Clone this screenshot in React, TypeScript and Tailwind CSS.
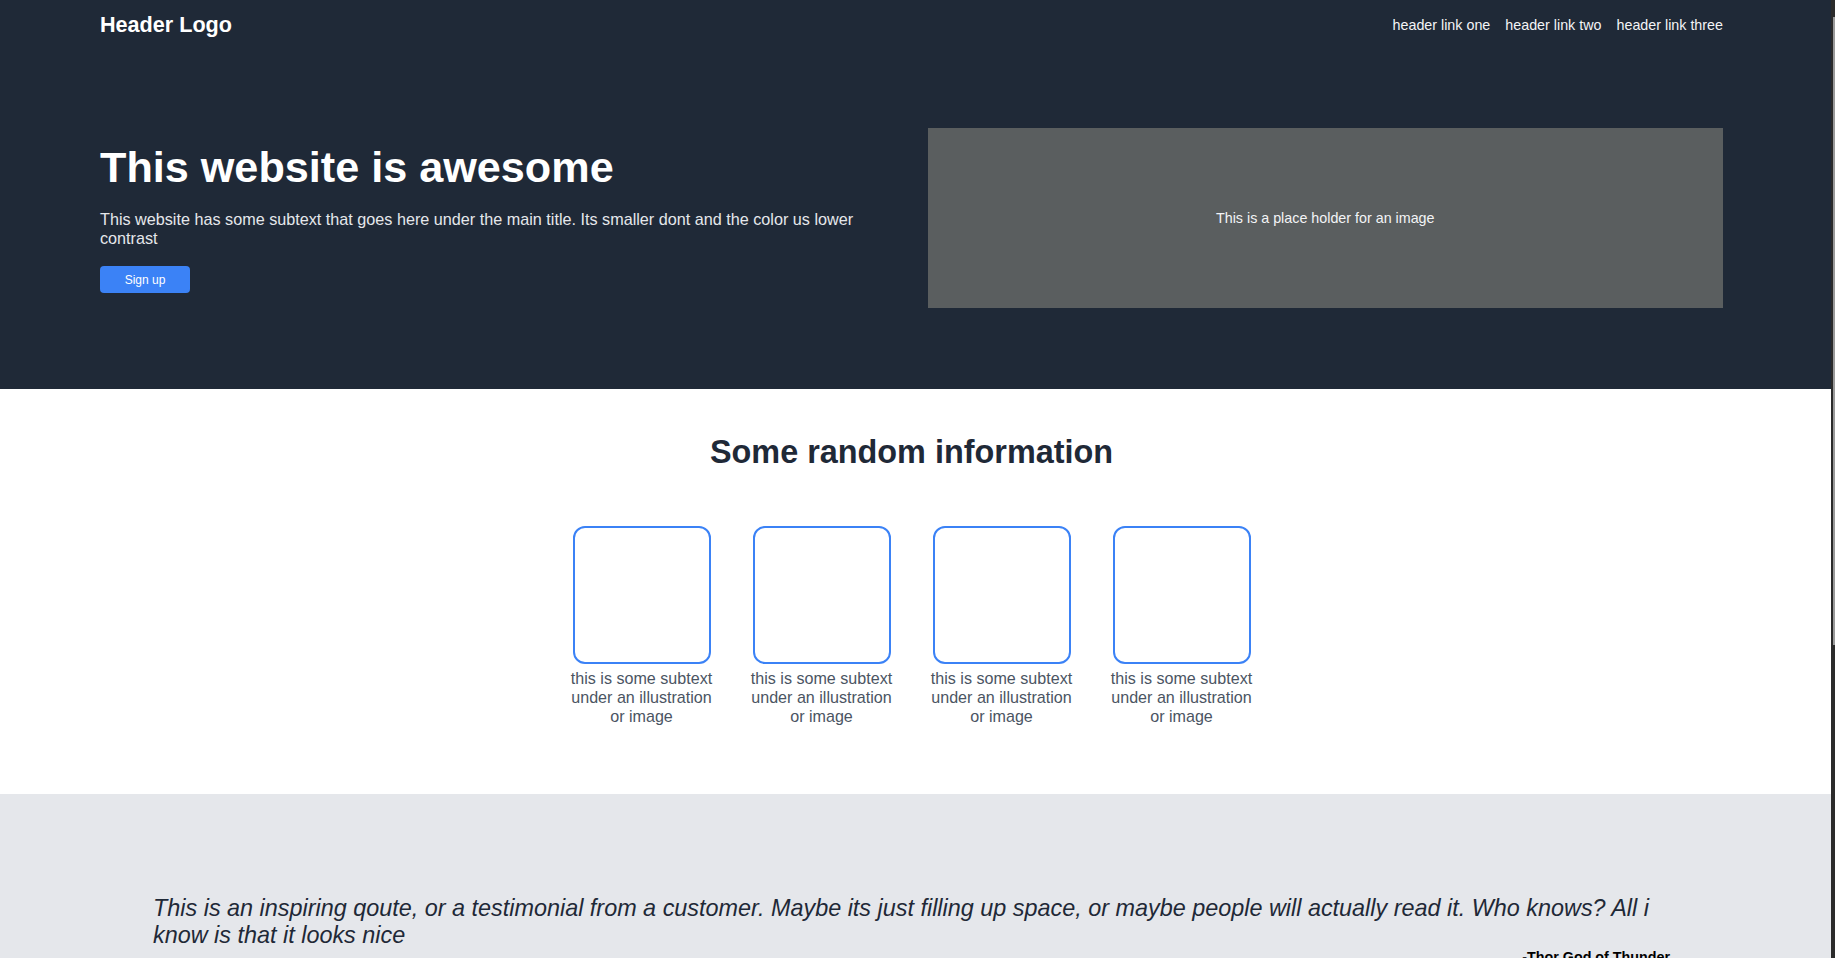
import React from "react";

const cards = [1, 2, 3, 4];

const Header: React.FC = () => (
  <header className="h-[50px] flex items-center justify-between">
    <span className="text-[21.6px] leading-[normal] font-bold text-white">Header Logo</span>
    <nav className="flex items-center gap-[15px] text-[14.3px] leading-[normal] text-gray-100">
      <a href="#">header link one</a>
      <a href="#">header link two</a>
      <a href="#">header link three</a>
    </nav>
  </header>
);

const Hero: React.FC = () => (
  <section className="bg-[#1f2937] pl-[100px] pr-[108px]">
    <Header />
    <div className="grid grid-cols-2 gap-8 items-center mt-[78px] pb-[81px]">
      <div>
        <h1 className="text-[43.2px] leading-[normal] font-bold text-white">This website is awesome</h1>
        <p className="mt-[18px] text-[16.2px] leading-[19px] text-gray-200">
          This website has some subtext that goes here under the main title. Its smaller dont and the color us lower
          contrast
        </p>
        <button className="mt-[18px] w-[90px] h-[27px] rounded-[4px] bg-[#3b82f6] text-white text-[12px] leading-none">
          Sign up
        </button>
      </div>
      <div className="h-[180px] bg-[#5a5e5f] flex items-center justify-center pt-[2px]">
        <span className="text-[14.3px] text-gray-100">This is a place holder for an image</span>
      </div>
    </div>
  </section>
);

const Info: React.FC = () => (
  <section className="bg-white pl-[100px] pr-[108px] pt-[45px] h-[405px]">
    <h2 className="text-center text-[32.4px] leading-[normal] font-bold text-[#1f2937]">Some random information</h2>
    <div className="mt-[55px] flex justify-center gap-[30px]">
      {cards.map((c) => (
        <div key={c} className="w-[150px] flex flex-col items-center">
          <div className="w-[138px] h-[138px] rounded-[12px] border-2 border-[#3b82f6]" />
          <p className="mt-[5px] text-center text-[16.1px] leading-[18.8px] text-[#4b5563]">
            this is some subtext under an illustration or image
          </p>
        </div>
      ))}
    </div>
  </section>
);

const Quote: React.FC = () => (
  <section className="bg-[#e5e7eb] pl-[153px] pr-[161px] pt-[101px] pb-10">
    <p className="italic text-[23.4px] leading-[27px] text-[#1f2937]">
      This is an inspiring qoute, or a testimonial from a customer. Maybe its just filling up space, or maybe people
      will actually read it. Who knows? All i know is that it looks nice
    </p>
    <p className="text-right text-[14.3px] leading-[normal] font-bold text-black">-Thor God of Thunder</p>
  </section>
);

export default function App() {
  return (
    <div className="w-[1835px] h-[958px] overflow-hidden flex font-['Liberation_Sans',Arial,sans-serif]">
      <main className="w-[1831px] shrink-0">
        <Hero />
        <Info />
        <Quote />
      </main>
      <div className="w-[4px] shrink-0 bg-[#2b2b2b] flex justify-end pt-[17px]">
        <div className="w-[2px] h-[628px] bg-[#9a9a9a]" />
      </div>
    </div>
  );
}
